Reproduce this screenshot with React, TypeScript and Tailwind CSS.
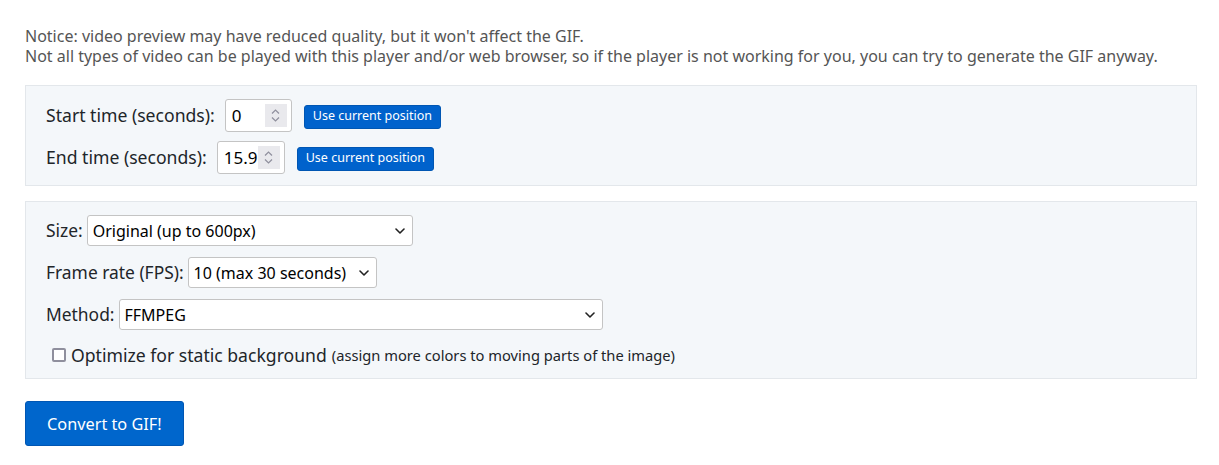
import React from 'react';

const font = { fontFamily: '"Noto Sans", "Open Sans", sans-serif' };

function Chevron({ className = '' }: { className?: string }) {
    return (
        <svg width="10" height="6" viewBox="0 0 10 6" className={className}>
            <path d="M1 1 L5 5 L9 1" fill="none" stroke="#222" strokeWidth="1.6" strokeLinecap="round" strokeLinejoin="round" />
        </svg>
    );
}

function SpinBox({ value, width }: { value: string; width: string }) {
    return (
        <div className={`relative flex h-[33px] ${width} items-center overflow-hidden rounded-[3px] border border-[#c4c4c4] bg-white pl-[6px]`}>
            <span className="whitespace-nowrap text-[17px] text-black">{value}</span>
            <div className="absolute top-[4px] right-[4px] flex h-[23px] w-[22px] flex-col items-center justify-center gap-[3px] bg-[#e9e9ed]">
                <svg width="9" height="5" viewBox="0 0 9 5"><path d="M1 4.5 L4.5 1 L8 4.5" fill="none" stroke="#8f8f9d" strokeWidth="1.2" /></svg>
                <svg width="9" height="5" viewBox="0 0 9 5"><path d="M1 0.5 L4.5 4 L8 0.5" fill="none" stroke="#8f8f9d" strokeWidth="1.2" /></svg>
            </div>
        </div>
    );
}

function PosButton() {
    return (
        <button className="ml-[2px] mt-[2px] h-[24px] rounded-[3px] border border-[#0056b3] bg-[#0062cc] px-[8px] text-[12.5px] leading-none text-white">
            Use current position
        </button>
    );
}

function FakeSelect({ value, width }: { value: string; width: string }) {
    return (
        <div className={`flex h-[31px] ${width} items-center justify-between rounded-[3px] border border-[#c4c4c4] bg-white pl-[5px] pr-[7px]`}>
            <span className="text-[16px] text-black">{value}</span>
            <Chevron />
        </div>
    );
}

export default function App() {
    return (
        <div className="min-h-[465px] bg-white px-[25px] pt-[26px] text-[#212529]" style={font}>
            <p className="text-[16px] leading-[20px] text-[#555]">
                Notice: video preview may have reduced quality, but it won't affect the GIF.
                <br />
                Not all types of video can be played with this player and/or web browser, so if the player is not working for you, you can try to generate the GIF anyway.
            </p>

            <div className="mt-[19px] w-[1172px] border border-[#e3e7eb] bg-[#f4f7fa] px-[20px] pt-[13px] pb-[11px]">
                <div className="flex items-center gap-[10px]">
                    <span className="text-[17.6px]">Start time (seconds):</span>
                    <SpinBox value="0" width="w-[67px]" />
                    <PosButton />
                </div>
                <div className="mt-[9px] flex items-center gap-[10px]">
                    <span className="text-[17.6px]">End time (seconds):</span>
                    <SpinBox value="15.96" width="w-[68px]" />
                    <PosButton />
                </div>
            </div>

            <div className="mt-[15px] w-[1172px] border border-[#e3e7eb] bg-[#f4f7fa] px-[20px] pt-[13px] pb-[10px]">
                <div className="flex items-center gap-[4px]">
                    <span className="text-[17.4px]">Size:</span>
                    <FakeSelect value="Original (up to 600px)" width="w-[326px]" />
                </div>
                <div className="mt-[11px] flex items-center gap-[4px]">
                    <span className="text-[17.4px]">Frame rate (FPS):</span>
                    <FakeSelect value="10 (max 30 seconds)" width="w-[189px]" />
                </div>
                <div className="mt-[11px] flex items-center gap-[4px]">
                    <span className="text-[17.4px]">Method:</span>
                    <FakeSelect value="FFMPEG" width="w-[484px]" />
                </div>
                <label className="mt-[12px] flex items-center pl-[6px]">
                    <span className="mr-[5px] h-[14px] w-[14px] rounded-[2px] border-2 border-[#8f8f9d] bg-white" />
                    <span className="text-[17.6px]">Optimize for static background</span>
                    <span className="ml-[5px] text-[14.7px]">(assign more colors to moving parts of the image)</span>
                </label>
            </div>

            <button className="mt-[22px] h-[45px] rounded-[3px] border border-[#0056b3] bg-[#0066cc] px-[21px] text-[16.3px] text-white">
                Convert to GIF!
            </button>
        </div>
    );
}
